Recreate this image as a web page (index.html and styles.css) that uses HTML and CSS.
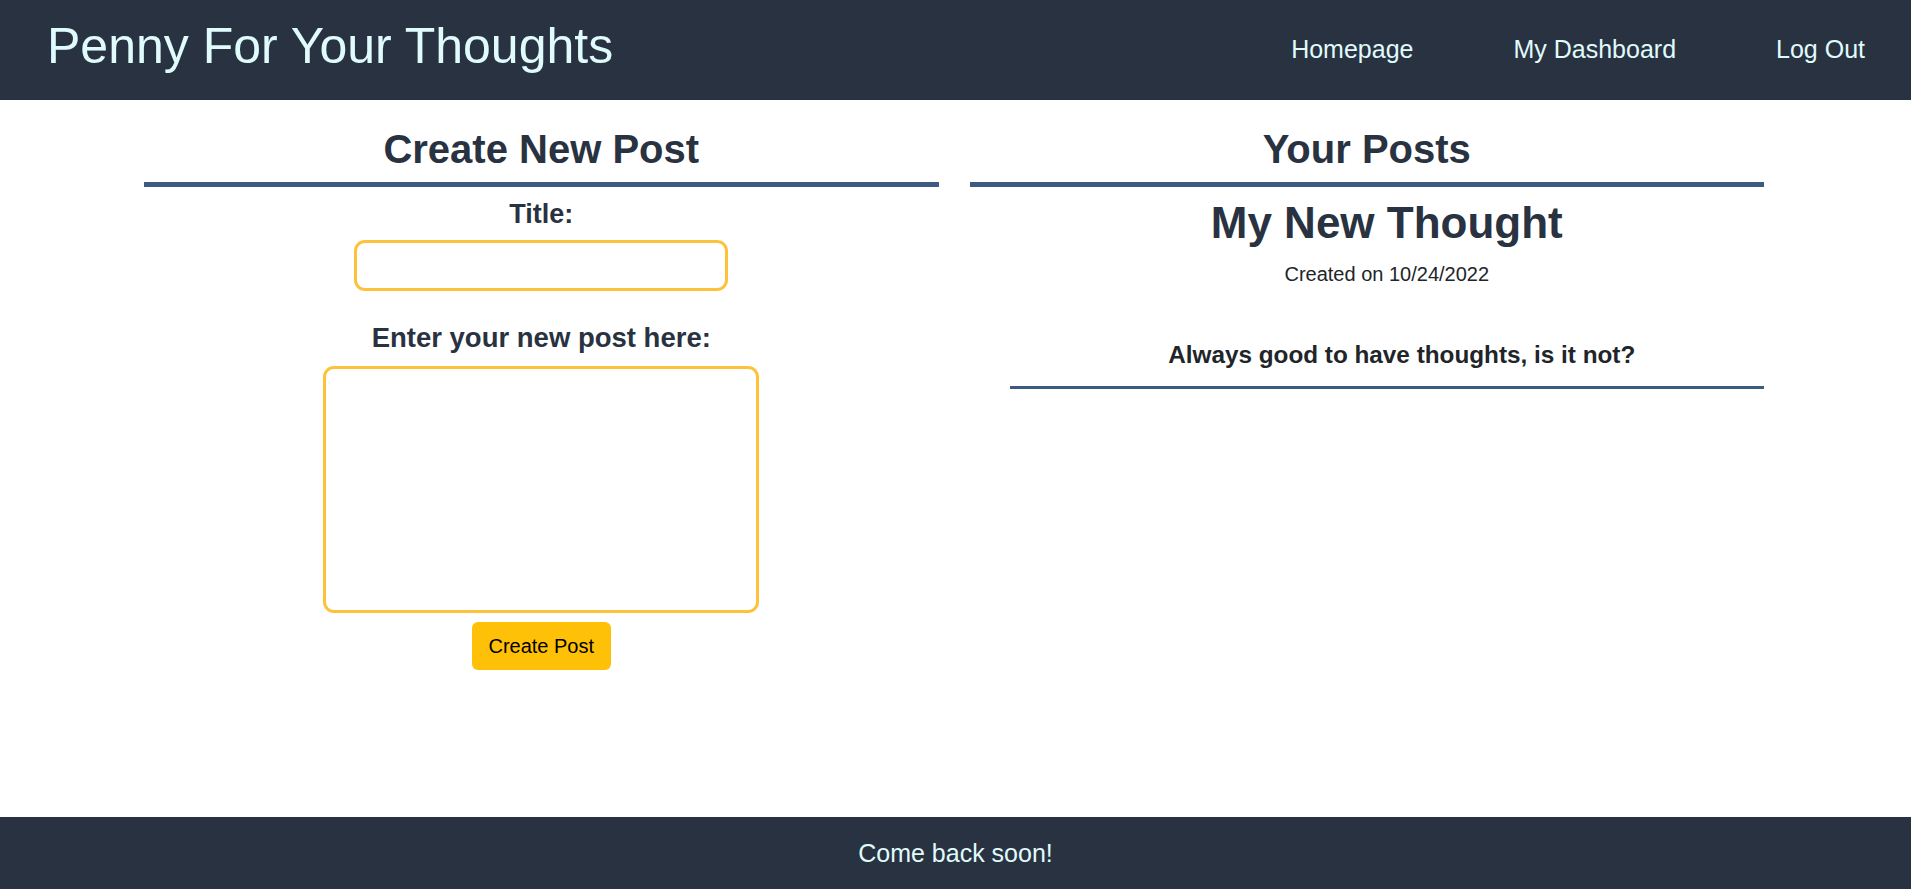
FILE: index.html
```html
<!DOCTYPE html>
<html lang="en">
<head>
<meta charset="utf-8">
<title>Penny For Your Thoughts</title>
<link rel="stylesheet" href="styles.css">
</head>
<body>
<header class="site-header">
  <h1 class="site-title">Penny For Your Thoughts</h1>
  <nav class="site-nav">
    <a class="nav-link" href="#">Homepage</a>
    <a class="nav-link" href="#">My Dashboard</a>
    <a class="nav-link" href="#">Log Out</a>
  </nav>
</header>
<main class="main">
  <section class="column">
    <h2 class="column-title">Create New Post</h2>
    <form class="post-form">
      <label class="form-label" for="title">Title:</label>
      <input class="title-input" id="title" type="text">
      <label class="form-label form-label-body" for="body">Enter your new post here:</label>
      <textarea class="body-input" id="body"></textarea>
      <button class="create-btn" type="button">Create Post</button>
    </form>
  </section>
  <section class="column">
    <h2 class="column-title">Your Posts</h2>
    <article class="post-card">
      <h3 class="post-title">My New Thought</h3>
      <p class="post-date">Created on 10/24/2022</p>
      <p class="post-body">Always good to have thoughts, is it not?</p>
    </article>
  </section>
</main>
<footer class="site-footer">
  <p class="footer-text">Come back soon!</p>
</footer>
</body>
</html>
```
FILE: styles.css
```css
* { box-sizing: border-box; }
html, body { height: 100%; }
body {
  margin: 0;
  font-family: "Liberation Sans", Arial, sans-serif;
  color: #212529;
  background: #ffffff;
  display: flex;
  flex-direction: column;
  min-height: 100vh;
}
.site-header {
  background: #293241;
  height: 100px;
  display: flex;
  align-items: center;
  justify-content: space-between;
  padding: 0 46px 0 47px;
}
.site-title {
  margin: 0 0 8px 0;
  font-size: 50px;
  font-weight: 400;
  color: #e0fbfc;
  line-height: 56px;
}
.site-nav {
  display: flex;
  gap: 100px;
  margin-bottom: 2px;
}
.nav-link {
  color: #e0fbfc;
  text-decoration: none;
  font-size: 25px;
  line-height: 30px;
}
.main {
  flex: 1;
  width: 1620px;
  margin: 0 0 0 144px;
  display: grid;
  grid-template-columns: 1fr 1fr;
  column-gap: 31px;
  align-items: start;
}
.column {
  display: flex;
  flex-direction: column;
}
.column-title {
  margin: 26px 0 0;
  font-size: 40px;
  line-height: 46px;
  font-weight: 700;
  color: #293241;
  text-align: center;
  padding-bottom: 10px;
  border-bottom: 5px solid #3d5a80;
}
.post-form {
  display: flex;
  flex-direction: column;
  align-items: center;
}
.form-label {
  margin-top: 11px;
  font-size: 27px;
  line-height: 32px;
  font-weight: 700;
  color: #293241;
}
.form-label-body {
  margin-top: 31px;
  font-size: 27.5px;
}
.title-input {
  margin-top: 10px;
  width: 374px;
  height: 51px;
  border: 3px solid #fdc13a;
  border-radius: 11px;
  outline: none;
  font-size: 20px;
  padding: 0 10px;
}
.body-input {
  margin-top: 12px;
  width: 436px;
  height: 247px;
  border: 3px solid #fdc13a;
  border-radius: 11px;
  outline: none;
  resize: none;
  font-size: 18px;
  padding: 8px;
}
.create-btn {
  margin-top: 9px;
  width: 139px;
  height: 48px;
  border: none;
  border-radius: 6px;
  background: #ffc107;
  color: #000000;
  font-family: "Liberation Sans", Arial, sans-serif;
  font-size: 20px;
  padding: 0;
}
.post-card {
  margin-left: 40px;
  text-align: center;
  padding-bottom: 17px;
  border-bottom: 3px solid #3d5a80;
}
.post-title {
  margin: 11px 0 0;
  font-size: 44px;
  line-height: 50px;
  font-weight: 700;
  color: #293241;
}
.post-date {
  margin: 14px 0 0;
  font-size: 20px;
  line-height: 24px;
  color: #212529;
}
.post-body {
  margin: 55px 0 0;
  padding-left: 30px;
  font-size: 24.3px;
  line-height: 28px;
  font-weight: 700;
  color: #212529;
}
.site-footer {
  background: #293241;
  height: 72px;
  display: flex;
  align-items: center;
  justify-content: center;
}
.footer-text {
  margin: 0;
  font-size: 25px;
  color: #e0fbfc;
}
```
